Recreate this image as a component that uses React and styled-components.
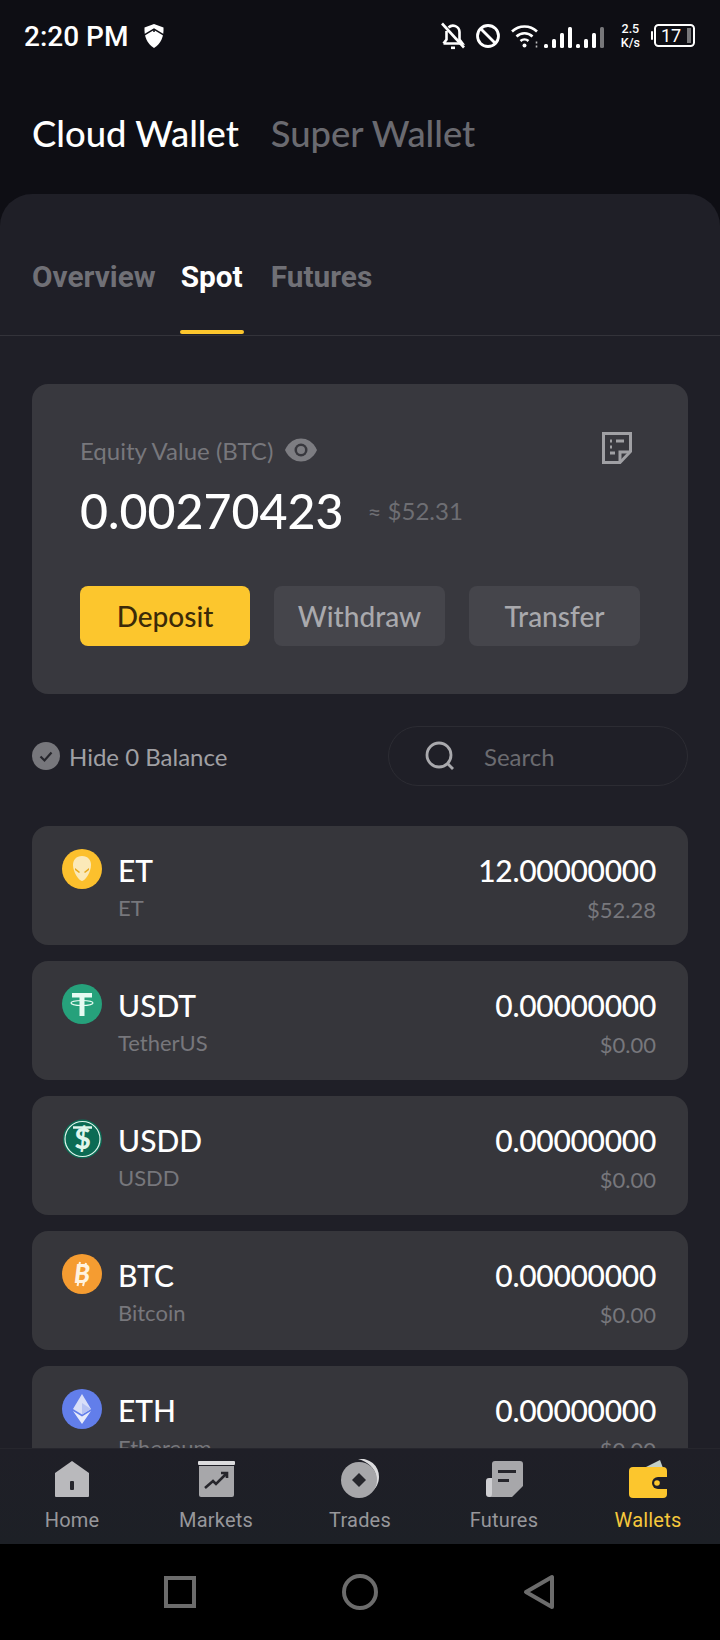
import React from 'react';
import styled, { createGlobalStyle } from 'styled-components';

const Global = createGlobalStyle`
html, body { margin:0; padding:0; background:#000; }
* { box-sizing:border-box; }
`;

const Phone = styled.div`
width:720px;
height:1640px;
display:flex;
flex-direction:column;
background:#0e0e14;
overflow:hidden;
font-family:"Lato","Liberation Sans",sans-serif;
`;

const StatusBar = styled.div`
height:72px;
flex:none;
display:flex;
align-items:center;
justify-content:space-between;
padding:0 25px 0 24px;
color:#fff;
`;
const StatusLeft = styled.div`
display:flex;
align-items:center;
gap:16px;
font:500 28px "Roboto",sans-serif;
`;
const StatusRight = styled.div`
display:flex;
align-items:center;
gap:11px;
`;
const SignalGroup = styled.div`
display:flex;
gap:2px;
margin-left:-8px;
`;
const Speed = styled.div`
font:500 12.5px/14px "Roboto",sans-serif;
text-align:center;
margin-left:4px;
`;

const Header = styled.div`
height:122px;
flex:none;
display:flex;
align-items:flex-start;
gap:32px;
padding:39px 32px 0;
`;
const WalletTab = styled.div`
font-size:36.4px;
line-height:44px;
font-weight:500;
color:${p => (p.$active ? '#fff' : '#6a6a70')};
`;

const Sheet = styled.div`
flex:1;
min-height:0;
display:flex;
flex-direction:column;
background:#1f1f27;
border-radius:32px 32px 0 0;
overflow:hidden;
`;
const Tabs = styled.div`
height:142px;
flex:none;
display:flex;
gap:25px;
padding:0 32px;
border-bottom:1px solid #33333a;
`;
const Tab = styled.div`
position:relative;
height:100%;
display:flex;
align-items:center;
padding-top:24px;
font:700 29.8px "Roboto",sans-serif;
color:${p => (p.$active ? '#fff' : '#707076')};
${p => p.$active && `
margin-right:3px;
&::after {
  content:"";
  position:absolute;
  left:-1px;
  right:-1px;
  bottom:1px;
  height:4px;
  border-radius:2px;
  background:#fcc62d;
}`}
`;

const Scroll = styled.div`
flex:1;
min-height:0;
overflow:hidden;
padding:48px 32px 0;
`;
const EquityCard = styled.div`
height:310px;
background:#38383e;
border-radius:16px;
padding:46px 48px 48px;
`;
const EquityTop = styled.div`
height:40px;
display:flex;
align-items:center;
justify-content:space-between;
`;
const EquityLabel = styled.div`
display:flex;
align-items:center;
gap:12px;
font-size:24px;
color:#77777c;
`;
const NoteWrap = styled.div`
display:flex;
margin:-4px 8px 0 0;
`;
const ValueRow = styled.div`
display:flex;
align-items:center;
gap:24px;
height:60px;
margin-top:10px;
`;
const Value = styled.div`
font-size:48.3px;
font-weight:500;
color:#fff;
`;
const Approx = styled.div`
font-size:24px;
color:#6e6e73;
`;
const Buttons = styled.div`
display:grid;
grid-template-columns:170px 171px 171px;
gap:24px;
margin-top:46px;
`;
const Button = styled.div`
height:60px;
display:flex;
align-items:center;
justify-content:center;
border-radius:8px;
font-size:28px;
font-weight:500;
background:${p => (p.$primary ? '#fcc62d' : '#45454b')};
color:${p => (p.$primary ? '#3b2a08' : '#a9a9ad')};
`;

const FilterRow = styled.div`
display:flex;
align-items:center;
justify-content:space-between;
margin-top:32px;
height:60px;
`;
const HideZero = styled.div`
display:flex;
align-items:center;
gap:9px;
font-size:24px;
color:#a0a0a4;
`;
const SearchBox = styled.div`
width:300px;
height:60px;
display:flex;
align-items:center;
gap:29px;
padding-left:36px;
border:1px solid #2c2c33;
border-radius:30px;
font-size:24px;
color:#6b6b70;
`;

const List = styled.div`
display:flex;
flex-direction:column;
gap:16px;
margin-top:40px;
`;
const Row = styled.div`
height:119px;
flex:none;
display:flex;
justify-content:space-between;
padding:23px 32px 0 30px;
background:#36363b;
border-radius:16px;
`;
const RowLeft = styled.div`
display:flex;
gap:16px;
`;
const RowText = styled.div`
display:flex;
flex-direction:column;
align-items:${p => (p.$right ? 'flex-end' : 'flex-start')};
`;
const Primary = styled.div`
font-size:30px;
line-height:42px;
font-weight:500;
letter-spacing:${p => (p.$right ? '-0.3px' : '0')};
color:#fff;
`;
const Secondary = styled.div`
font-size:22px;
line-height:34px;
color:#77777c;
margin-top:${p => (p.$right ? '2px' : '0')};
`;

const BottomNav = styled.div`
height:96px;
flex:none;
display:grid;
grid-template-columns:repeat(5,1fr);
background:linear-gradient(#1f1f27,#1d2026);
border-top:1px solid #26262d;
`;
const NavItem = styled.div`
display:flex;
flex-direction:column;
align-items:center;
padding-top:10px;
gap:7px;
font:400 20px/28px "Roboto",sans-serif;
letter-spacing:.2px;
color:${p => (p.$active ? '#f6c83c' : '#97979b')};
`;
const NavIcon = styled.div`
height:40px;
display:flex;
align-items:center;
justify-content:center;
`;
const SystemBar = styled.div`
height:96px;
flex:none;
display:flex;
align-items:center;
justify-content:space-between;
padding:0 165px 0 164px;
background:#000;
`;

const BellOff = () => (
  <svg width="24" height="28" viewBox="0 0 24 28" fill="none" stroke="#fff" strokeWidth="2.600">
    <path d="M2.500 21.500h19l-3-4v-7.500a6.500 6.500 0 0 0-11-4.500M5.500 9v8.500l-3 4" />
    <path d="M10 25.800h4" />
    <path d="M1 1.500l22 24" />
  </svg>
);
const NoEntry = () => (
  <svg width="24" height="24" viewBox="0 0 24 24" fill="none" stroke="#fff" strokeWidth="2.800">
    <circle cx="12" cy="12" r="10.500" />
    <path d="M4.500 4.500l15 15" />
  </svg>
);
const Wifi = () => (
  <svg width="30" height="26" viewBox="0 0 30 26" fill="none" stroke="#fff" strokeWidth="2.600">
    <path d="M1 8.500a18 18 0 0 1 25 0M5.500 13.500a11.500 11.500 0 0 1 16 0M9.500 18a6 6 0 0 1 8 0" />
    <circle cx="13.500" cy="22.500" r="2" fill="#fff" stroke="none" />
    <path d="M25.500 18.500v2M25.500 22.500v2" stroke="#bbb" strokeWidth="1.600" />
  </svg>
);
const Signal = ({ last }) => (
  <svg width="30" height="24" viewBox="0 0 30 24" fill="#fff">
    <rect x="0" y="20" width="4" height="4" rx="1.500" />
    <rect x="8" y="15" width="4" height="9" rx="1.500" />
    <rect x="16" y="9" width="4" height="15" rx="1.500" />
    <rect x="24" y="3" width="4" height="21" rx="1.500" fill={last || '#fff'} />
  </svg>
);
const Battery = () => (
  <svg width="44" height="24" viewBox="0 0 44 24">
    <rect x="0" y="7" width="2" height="9" rx="1" fill="#fff" />
    <rect x="4" y="1" width="39" height="21" rx="3.500" fill="none" stroke="#fff" strokeWidth="2" />
    <rect x="36" y="4" width="4" height="15" fill="#77777a" />
    <text x="20" y="18" fontFamily="Roboto" fontSize="18" fill="#fff" textAnchor="middle">17</text>
  </svg>
);
const Shield = () => (
  <svg width="20" height="24" viewBox="0 0 20 24" fill="#fff">
    <path d="M10 0l9.500 3.500c.5 9-2.500 16-9.500 20.500C3 19.500 0 12.500.5 3.500z" />
    <path d="M0 11l10-6 10 6M10 5v3" stroke="#0e0e14" strokeWidth="1.500" fill="none" />
  </svg>
);
const Eye = () => (
  <svg width="32" height="24" viewBox="0 0 32 24">
    <path d="M0 12C4 3.500 10 .5 16 .5S28 3.500 32 12c-4 8.500-10 11.500-16 11.500S4 20.500 0 12z" fill="#7d7d82" />
    <circle cx="16" cy="12" r="6.500" fill="#38383e" />
    <circle cx="16" cy="12" r="4" fill="#7d7d82" />
  </svg>
);
const NoteIcon = () => (
  <svg width="30" height="32" viewBox="0 0 30 32" fill="none" stroke="#a0a0a4" strokeWidth="3">
    <path d="M1.500 1.500h27v18L18 30.500H1.500z" />
    <path d="M18 30v-10h10" />
    <path d="M8 9h2M14 9h8M8 15h2M8 21h5" />
  </svg>
);
const Check = () => (
  <svg width="28" height="28" viewBox="0 0 28 28">
    <circle cx="14" cy="14" r="14" fill="#77777c" />
    <path d="M8.500 14.500l4 4 7-8" fill="none" stroke="#26262c" strokeWidth="2.200" />
  </svg>
);
const SearchIcon = () => (
  <svg width="30" height="30" viewBox="0 0 30 30" fill="none" stroke="#a9a9ad" strokeWidth="2.800">
    <circle cx="14" cy="14" r="12" />
    <path d="M22.500 22.500l5.500 5.500" />
  </svg>
);

const CoinSvg = styled.svg`
flex:none;
`;

const Coin = ({ kind }) => {
  const art = {
    et: (
      <>
        <circle cx="20" cy="20" r="20" fill="#fcc02d" />
        <path d="M20 7c6 0 9 4 9 9 0 7-6 16-9 16s-9-9-9-16c0-5 3-9 9-9z" fill="#fbe9b8" />
        <path d="M13 19l5 4-1 1-4-3zM27 19l-5 4 1 1 4-3z" fill="#e8a91e" />
      </>
    ),
    usdt: (
      <>
        <circle cx="20" cy="20" r="20" fill="#26a17b" />
        <path d="M10 9h20v4.500h-7.500V32h-5V13.500H10z" fill="#e6fbf2" />
        <ellipse cx="20" cy="19" rx="11" ry="2.500" fill="none" stroke="#e6fbf2" strokeWidth="1.200" />
      </>
    ),
    usdd: (
      <>
        <circle cx="20.500" cy="20" r="19.500" fill="#0b6b54" />
        <circle cx="20.500" cy="20" r="17.500" fill="none" stroke="#dff5ec" strokeWidth="1.200" />
        <path d="M11 8.500h19" stroke="#dff5ec" strokeWidth="2.500" />
        <text x="20.500" y="30" textAnchor="middle" fontFamily="Lato" fontWeight="900" fontSize="28" fill="#dff5ec">$</text>
      </>
    ),
    btc: (
      <>
        <circle cx="20" cy="20" r="20" fill="#f59c31" />
        <path d="M18 8l-1 4M24 9l-1 4M16.500 27l-1 5M22 28l-1 4" stroke="#fff3df" strokeWidth="2" />
        <text x="20" y="29" textAnchor="middle" fontFamily="Lato" fontWeight="900" fontStyle="italic" fontSize="26" fill="#fff3df">B</text>
      </>
    ),
    eth: (
      <>
        <circle cx="20" cy="20" r="20" fill="#627eea" />
        <path d="M20 5l9 15-9 5.500L11 20z" fill="#d9dff8" />
        <path d="M20 27.500l9-5.500-9 13-9-13z" fill="#e6eafb" />
        <path d="M20 14l9 6-9 5.500z" fill="#b7c3f3" />
      </>
    ),
  };
  return <CoinSvg width="40" height="40" viewBox="0 0 40 40">{art[kind]}</CoinSvg>;
};

const HomeIcon = () => (
  <svg width="34" height="36" viewBox="0 0 34 36">
    <path d="M17 0l17 12v23a1 1 0 0 1-1 1H1a1 1 0 0 1-1-1V12z" fill="#b9b9bc" />
    <rect x="15" y="20" width="4" height="9" rx="1" fill="#26262c" />
  </svg>
);
const MarketsIcon = () => (
  <svg width="37" height="36" viewBox="0 0 37 36">
    <rect x="0" y="0" width="37" height="4" rx="1" fill="#dcdcde" />
    <path d="M1 5h35v29a2 2 0 0 1-2 2H3a2 2 0 0 1-2-2z" fill="#a7a7aa" />
    <path d="M7 27l8-7 3 3 10-10M23 12h6v5" fill="none" stroke="#26262c" strokeWidth="2.600" />
  </svg>
);
const TradesIcon = () => (
  <svg width="40" height="40" viewBox="0 0 40 40">
    <path d="M18 0a18 18 0 0 1 21 18c0 6-3 12-8 15 4-5 6-10 5-16-1-8-9-15-18-17z" fill="#dcdcde" />
    <circle cx="19" cy="21" r="18" fill="#a7a7aa" />
    <path d="M19 14l7 7-7 7-7-7z" fill="#26262c" />
  </svg>
);
const FuturesIcon = () => (
  <svg width="37" height="36" viewBox="0 0 37 36">
    <path d="M8 17H3a3 3 0 0 0-3 3v13a3 3 0 0 0 3 3h6z" fill="#cfcfd2" />
    <path d="M9 0h25a3 3 0 0 1 3 3v22L26 36H3c2 0 3-1 3-4V3a3 3 0 0 1 3-3z" fill="#a7a7aa" />
    <path d="M12 10.500h18" stroke="#26262c" strokeWidth="3" />
    <path d="M12 19.500h11" stroke="#26262c" strokeWidth="3" />
  </svg>
);
const WalletIcon = () => (
  <svg width="39" height="38" viewBox="0 0 39 38">
    <path d="M15 8L31 0l3 8z" fill="#c3d0c8" />
    <rect x="0" y="7" width="38" height="31" rx="4" fill="#fcc62d" />
    <path d="M39 17H29a6 6 0 0 0 0 12h10z" fill="#1f1f27" />
    <circle cx="28" cy="23" r="2.800" fill="#fcc62d" />
  </svg>
);

const coins = [
  { kind: 'et', name: 'ET', full: 'ET', amount: '12.00000000', usd: '$52.28' },
  { kind: 'usdt', name: 'USDT', full: 'TetherUS', amount: '0.00000000', usd: '$0.00' },
  { kind: 'usdd', name: 'USDD', full: 'USDD', amount: '0.00000000', usd: '$0.00' },
  { kind: 'btc', name: 'BTC', full: 'Bitcoin', amount: '0.00000000', usd: '$0.00' },
  { kind: 'eth', name: 'ETH', full: 'Ethereum', amount: '0.00000000', usd: '$0.00' },
];

const navItems = [
  { label: 'Home', Icon: HomeIcon },
  { label: 'Markets', Icon: MarketsIcon },
  { label: 'Trades', Icon: TradesIcon },
  { label: 'Futures', Icon: FuturesIcon },
  { label: 'Wallets', Icon: WalletIcon, active: true },
];

const App = () => (
  <Phone>
    <Global />
    <StatusBar>
      <StatusLeft>2:20 PM <Shield /></StatusLeft>
      <StatusRight>
        <BellOff />
        <NoEntry />
        <Wifi />
        <SignalGroup>
          <Signal />
          <Signal last="#77777a" />
        </SignalGroup>
        <Speed>2.5<br />K/s</Speed>
        <Battery />
      </StatusRight>
    </StatusBar>
    <Header>
      <WalletTab $active>Cloud Wallet</WalletTab>
      <WalletTab>Super Wallet</WalletTab>
    </Header>
    <Sheet>
      <Tabs>
        <Tab>Overview</Tab>
        <Tab $active>Spot</Tab>
        <Tab>Futures</Tab>
      </Tabs>
      <Scroll>
        <EquityCard>
          <EquityTop>
            <EquityLabel>Equity Value (BTC) <Eye /></EquityLabel>
            <NoteWrap><NoteIcon /></NoteWrap>
          </EquityTop>
          <ValueRow>
            <Value>0.00270423</Value>
            <Approx>≈ $52.31</Approx>
          </ValueRow>
          <Buttons>
            <Button $primary>Deposit</Button>
            <Button>Withdraw</Button>
            <Button>Transfer</Button>
          </Buttons>
        </EquityCard>
        <FilterRow>
          <HideZero><Check /> Hide 0 Balance</HideZero>
          <SearchBox><SearchIcon /> Search</SearchBox>
        </FilterRow>
        <List>
          {coins.map(c => (
            <Row key={c.kind}>
              <RowLeft>
                <Coin kind={c.kind} />
                <RowText>
                  <Primary>{c.name}</Primary>
                  <Secondary>{c.full}</Secondary>
                </RowText>
              </RowLeft>
              <RowText $right>
                <Primary $right>{c.amount}</Primary>
                <Secondary $right>{c.usd}</Secondary>
              </RowText>
            </Row>
          ))}
        </List>
      </Scroll>
      <BottomNav>
        {navItems.map(({ label, Icon, active }) => (
          <NavItem key={label} $active={active}>
            <NavIcon><Icon /></NavIcon>
            {label}
          </NavItem>
        ))}
      </BottomNav>
    </Sheet>
    <SystemBar>
      <svg width="32" height="32" viewBox="0 0 32 32" fill="none" stroke="#6c6c6c" strokeWidth="4">
        <rect x="2" y="2" width="28" height="28" />
      </svg>
      <svg width="36" height="36" viewBox="0 0 36 36" fill="none" stroke="#6c6c6c" strokeWidth="4">
        <circle cx="18" cy="18" r="16" />
      </svg>
      <svg width="32" height="36" viewBox="0 0 32 36" fill="none" stroke="#6c6c6c" strokeWidth="4">
        <path d="M29 3v30L3 18z" strokeLinejoin="round" />
      </svg>
    </SystemBar>
  </Phone>
);

export default App;
